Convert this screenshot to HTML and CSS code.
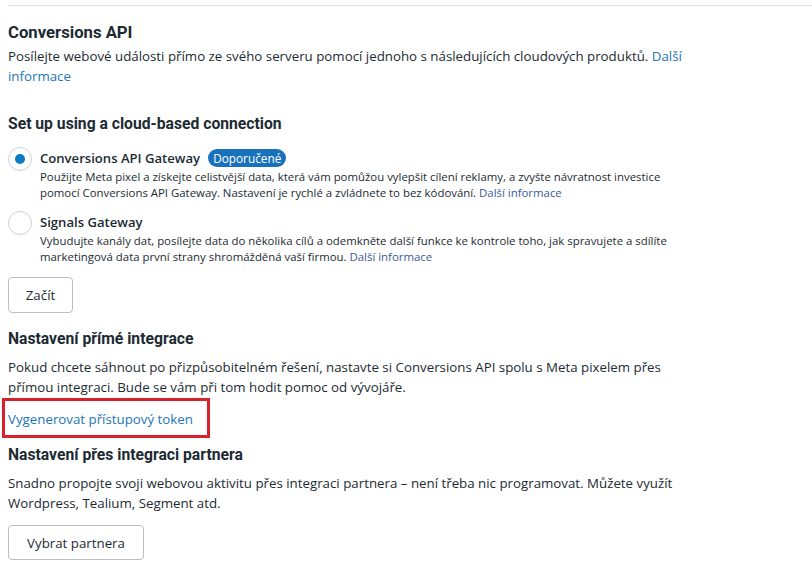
FILE: index.html
```html
<!DOCTYPE html>
<html lang="cs">
<head>
<meta charset="utf-8">
<link rel="stylesheet" href="styles.css">
</head>
<body>
<div class="divider"></div>
<main class="page">
  <section class="intro">
    <h2 class="title">Conversions API</h2>
    <p class="text">Posílejte webové události přímo ze svého serveru pomocí jednoho s následujících cloudových produktů. <a class="link" href="#">Další informace</a></p>
  </section>

  <section class="cloud">
    <h3 class="heading">Set up using a cloud-based connection</h3>
    <div class="options">
      <div class="option">
        <span class="radio checked"><span class="dot"></span></span>
        <div class="option-body">
          <div class="option-title">Conversions API Gateway <span class="badge">Doporučené</span></div>
          <p class="option-desc">Použijte Meta pixel a získejte celistvější data, která vám pomůžou vylepšit cílení reklamy, a zvyšte návratnost investice pomocí Conversions API Gateway. Nastavení je rychlé a zvládnete to bez kódování. <a class="link-muted" href="#">Další informace</a></p>
        </div>
      </div>
      <div class="option">
        <span class="radio"></span>
        <div class="option-body">
          <div class="option-title">Signals Gateway</div>
          <p class="option-desc">Vybudujte kanály dat, posílejte data do několika cílů a odemkněte další funkce ke kontrole toho, jak spravujete a sdílíte marketingová data první strany shromážděná vaší firmou. <a class="link-muted" href="#">Další informace</a></p>
        </div>
      </div>
    </div>
    <button class="btn btn-start">Začít</button>
  </section>

  <section class="direct">
    <h3 class="heading">Nastavení přímé integrace</h3>
    <p class="text">Pokud chcete sáhnout po přizpůsobitelném řešení, nastavte si Conversions API spolu s Meta pixelem přes přímou integraci. Bude se vám při tom hodit pomoc od vývojáře.</p>
    <div class="highlight"><a class="link" href="#">Vygenerovat přístupový token</a></div>
  </section>

  <section class="partner">
    <h3 class="heading">Nastavení přes integraci partnera</h3>
    <p class="text">Snadno propojte svoji webovou aktivitu přes integraci partnera – není třeba nic programovat. Můžete využít Wordpress, Tealium, Segment atd.</p>
    <button class="btn btn-partner">Vybrat partnera</button>
  </section>
</main>
</body>
</html>
```

FILE: styles.css
```css
html, body {
  margin: 0;
  padding: 0;
  background: #ffffff;
}
body {
  font-family: "Open Sans", "Noto Sans", "Liberation Sans", sans-serif;
  color: #1c2b33;
  font-size: 13.3px;
  line-height: 20px;
  padding-top: 5px;
}
.divider {
  margin-left: 8px;
  height: 1px;
  background: #dcdfe3;
}
.page {
  padding: 17px 0 0 8px;
  width: 692px;
}
.title {
  margin: 0;
  font-family: Roboto, "Liberation Sans", sans-serif;
  font-size: 16.7px;
  font-weight: 700;
  line-height: 20px;
}
.heading {
  margin: 0;
  font-family: Roboto, "Liberation Sans", sans-serif;
  font-size: 15.7px;
  font-weight: 700;
  line-height: 20px;
}
.text {
  margin: 0;
  font-size: 13.3px;
  line-height: 20px;
}
.intro .text { margin-top: 3px; }
.link {
  color: #1b76b9;
  text-decoration: none;
}
.link-muted {
  color: #3b5a99;
  text-decoration: none;
}
.cloud { margin-top: 28px; }
.options {
  margin-top: 14px;
  display: flex;
  flex-direction: column;
  gap: 11px;
}
.option {
  display: flex;
  gap: 8px;
  align-items: flex-start;
}
.radio {
  flex: none;
  box-sizing: border-box;
  width: 24px;
  height: 24px;
  margin-top: -1px;
  border: 1px solid #ccd0d5;
  border-radius: 50%;
  display: flex;
  align-items: center;
  justify-content: center;
  background: #fff;
}
.dot {
  width: 10px;
  height: 10px;
  border-radius: 50%;
  background: #0b7bc2;
}
.option-body { flex: 1; }
.option-title {
  font-size: 13.1px;
  font-weight: 600;
  line-height: 20px;
  display: flex;
  align-items: center;
  gap: 8px;
}
.badge {
  display: inline-block;
  background: #1872bb;
  color: #fff;
  font-weight: 500;
  font-size: 11.8px;
  line-height: 18px;
  padding: 0 5px;
  border-radius: 9px;
}
.option-desc {
  margin: 1px 0 0;
  font-size: 11.4px;
  line-height: 16px;
}
.btn {
  display: block;
  box-sizing: border-box;
  font-family: "Open Sans", "Noto Sans", "Liberation Sans", sans-serif;
  font-size: 13.3px;
  color: #1c2b33;
  background: #fff;
  border: 1px solid #bcc0c4;
  border-radius: 4px;
  height: 36px;
  padding: 0 14px;
  cursor: pointer;
}
.btn-start { margin-top: 12px; width: 65px; padding: 0; }
.btn-partner { margin-top: 12px; width: 136px; height: 35px; padding: 0; }
.direct { margin-top: 16px; }
.direct .text { margin-top: 8px; }
.highlight {
  margin: 1px 0 0 -6px;
  width: 208px;
  box-sizing: border-box;
  height: 40px;
  border: 3px solid #d8212a;
  padding: 8px 0 0 3px;
}
.partner { margin-top: 7px; }
.partner .text { margin-top: 8px; }
```
